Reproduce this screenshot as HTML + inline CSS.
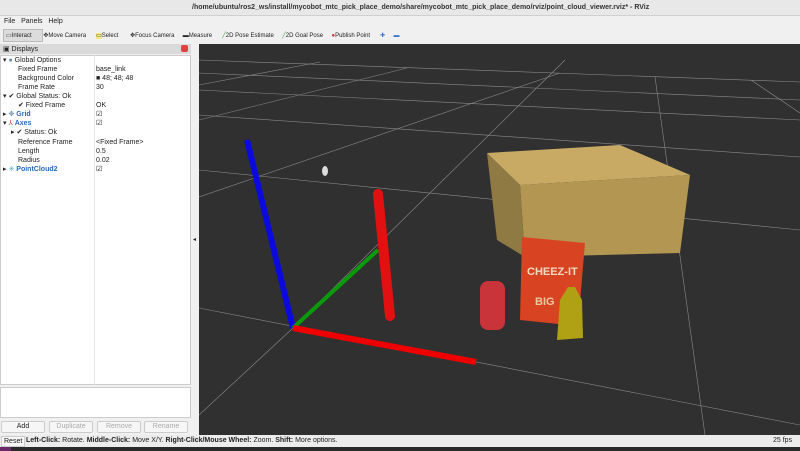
<!DOCTYPE html><html><head><style>
*{margin:0;padding:0;box-sizing:border-box}
body{width:800px;height:451px;overflow:hidden;background:#f0f0f0;font-family:"Liberation Sans",sans-serif;font-size:7px;color:#222;position:relative}
.a{position:absolute;white-space:nowrap}
.row{position:absolute;left:0;width:190px;height:9px;line-height:9px}
.btn{position:absolute;top:421px;height:12px;width:44px;border:1px solid #ccc;background:#f6f6f6;text-align:center;line-height:10px;color:#aaa;border-radius:2px}
</style></head><body>
<div class="a" style="left:0;top:0;width:800px;height:16px;background:#e8e8e8;border-bottom:1px solid #d0d0d0"></div>
<div class="a" style="left:192px;top:4px;font-weight:bold;font-size:7px;color:#333">/home/ubuntu/ros2_ws/install/mycobot_mtc_pick_place_demo/share/mycobot_mtc_pick_place_demo/rviz/point_cloud_viewer.rviz* - RViz</div>
<div class="a" style="left:4px;top:18px">File&nbsp;&nbsp; Panels&nbsp;&nbsp; Help</div>
<div class="a" style="left:3px;top:29px;width:40px;height:13px;background:#dcdcdc;border:1px solid #bbb"></div>
<div class="a" style="left:6px;top:32px;font-size:6px">▭Interact&nbsp;&nbsp;&nbsp;&nbsp;&nbsp;&nbsp; ✥Move Camera&nbsp;&nbsp;&nbsp;&nbsp;&nbsp; <span style="background:#f3e58a">▭</span>Select&nbsp;&nbsp;&nbsp;&nbsp;&nbsp;&nbsp; ✥Focus Camera&nbsp;&nbsp;&nbsp;&nbsp; ▬Measure&nbsp;&nbsp;&nbsp;&nbsp;&nbsp; <span style="color:#3a3">╱</span>2D Pose Estimate&nbsp;&nbsp;&nbsp;&nbsp; <span style="color:#3a3">╱</span>2D Goal Pose&nbsp;&nbsp;&nbsp;&nbsp; <span style="color:#c33">●</span>Publish Point&nbsp;&nbsp;&nbsp;&nbsp;&nbsp; <span style="color:#37c">✚</span>&nbsp;&nbsp;&nbsp;&nbsp; <span style="color:#37c">▬</span></div>
<div class="a" style="left:0;top:44px;width:191px;height:10px;background:#dadada"></div>
<div class="a" style="left:3px;top:45px;font-size:7px">▣ Displays</div>
<div class="a" style="left:181px;top:45px;width:7px;height:7px;background:#e04040;border-radius:2px"></div>
<div class="a" style="left:0;top:55px;width:191px;height:330px;background:#fff;border:1px solid #ccc"></div>
<div class="a" style="left:94px;top:55px;width:1px;height:330px;background:#e4e4e4"></div>
<div class="a" style="left:0;top:387px;width:191px;height:31px;background:#fff;border:1px solid #ccc"></div>
<div class="row" style="top:56px"><span class="a" style="left:3px">▾ <span style="color:#68a">●</span> Global Options</span></div>
<div class="row" style="top:65px"><span class="a" style="left:18px">Fixed Frame</span><span class="a" style="left:96px">base_link</span></div>
<div class="row" style="top:74px"><span class="a" style="left:18px">Background Color</span><span class="a" style="left:96px">■ 48; 48; 48</span></div>
<div class="row" style="top:83px"><span class="a" style="left:18px">Frame Rate</span><span class="a" style="left:96px">30</span></div>
<div class="row" style="top:92px"><span class="a" style="left:3px">▾ ✔ Global Status: Ok</span></div>
<div class="row" style="top:101px"><span class="a" style="left:18px">✔ Fixed Frame</span><span class="a" style="left:96px">OK</span></div>
<div class="row" style="top:110px"><span class="a" style="left:3px">▸ <span style="color:#68a">✥</span> <b style="color:#2a6ac0">Grid</b></span><span class="a" style="left:96px">☑</span></div>
<div class="row" style="top:119px"><span class="a" style="left:3px">▾ <span style="color:#c44">⅄</span> <b style="color:#2a6ac0">Axes</b></span><span class="a" style="left:96px">☑</span></div>
<div class="row" style="top:128px"><span class="a" style="left:11px">▸ ✔ Status: Ok</span></div>
<div class="row" style="top:138px"><span class="a" style="left:18px">Reference Frame</span><span class="a" style="left:96px">&lt;Fixed Frame&gt;</span></div>
<div class="row" style="top:147px"><span class="a" style="left:18px">Length</span><span class="a" style="left:96px">0.5</span></div>
<div class="row" style="top:156px"><span class="a" style="left:18px">Radius</span><span class="a" style="left:96px">0.02</span></div>
<div class="row" style="top:165px"><span class="a" style="left:3px">▸ <span style="color:#4ac">✳</span> <b style="color:#2a6ac0">PointCloud2</b></span><span class="a" style="left:96px">☑</span></div>
<div class="btn" style="left:1px;color:#222">Add</div>
<div class="btn" style="left:49px">Duplicate</div>
<div class="btn" style="left:97px">Remove</div>
<div class="btn" style="left:144px">Rename</div>
<svg class="a" style="left:199px;top:44px" width="601" height="391" viewBox="199 44 601 391">
<rect x="199" y="44" width="601" height="391" fill="#303030"/>
<g stroke="#8a8a8a" stroke-width="0.6" fill="none">
<line x1="199" y1="60" x2="800" y2="82"/><line x1="199" y1="73" x2="800" y2="100"/>
<line x1="199" y1="90" x2="800" y2="120"/><line x1="199" y1="115" x2="800" y2="157"/>
<line x1="199" y1="170" x2="800" y2="230"/><line x1="199" y1="308" x2="800" y2="425"/>
<line x1="199" y1="197" x2="560" y2="73"/><line x1="199" y1="120" x2="407" y2="68"/>
<line x1="199" y1="85" x2="320" y2="62"/><line x1="199" y1="415" x2="293" y2="328"/>
<line x1="293" y1="328" x2="565" y2="60"/><line x1="655" y1="77" x2="705" y2="435"/>
<line x1="751" y1="80" x2="800" y2="113"/>
</g>
<line x1="247" y1="140" x2="293" y2="328" stroke="#0a0ae0" stroke-width="6"/>
<line x1="293" y1="328" x2="378" y2="250" stroke="#0a9a0a" stroke-width="4"/>
<line x1="293" y1="328" x2="476" y2="362" stroke="#e00" stroke-width="6"/>
<line x1="378" y1="194" x2="390" y2="316" stroke="#e21010" stroke-width="10" stroke-linecap="round"/>
<ellipse cx="325" cy="171" rx="3" ry="5" fill="#ddd"/>
<polygon points="487,153 620,145 690,175 520,185" fill="#c9aa65"/>
<polygon points="520,185 690,175 680,253 525,257" fill="#b39652"/>
<polygon points="487,153 520,185 525,257 497,240" fill="#8f7a44"/>
<polygon points="522,237 585,243 578,326 520,320" fill="#d84422"/>
<text x="527" y="275" font-size="11" font-weight="bold" fill="#f3d8c0" font-family="Liberation Sans">CHEEZ-IT</text>
<text x="535" y="305" font-size="11" font-weight="bold" fill="#f0c8a0" font-family="Liberation Sans">BIG</text>
<rect x="480" y="281" width="25" height="49" rx="8" fill="#c9333a"/>
<path d="M560 300 L568 287 L575 287 L582 300 L583 338 L557 340 Z" fill="#b0a014"/>
</svg>
<div class="a" style="left:193px;top:236px;font-size:6px">◂</div>
<div class="a" style="left:0;top:435px;width:800px;height:12px;background:#ececec"></div>
<div class="a" style="left:1px;top:436px;border:1px solid #ccc;background:#f7f7f7;padding:0 2px;height:11px;line-height:9px">Reset</div>
<div class="a" style="left:26px;top:437px"><b>Left-Click:</b> Rotate. <b>Middle-Click:</b> Move X/Y. <b>Right-Click/Mouse Wheel:</b> Zoom. <b>Shift:</b> More options.</div>
<div class="a" style="left:773px;top:437px">25 fps</div>
<div class="a" style="left:0;top:447px;width:800px;height:4px;background:#2a2a2a"></div>
<div class="a" style="left:0;top:447px;width:11px;height:4px;background:#6a2a6a"></div>
</body></html>
